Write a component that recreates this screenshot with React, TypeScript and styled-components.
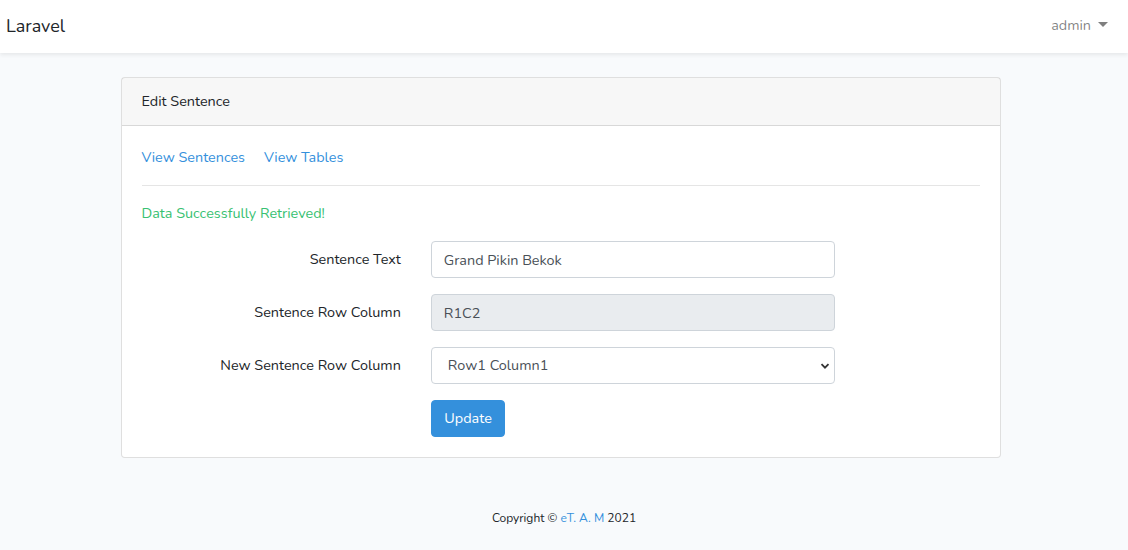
import React, { ReactElement } from 'react';
import styled, { createGlobalStyle } from 'styled-components';

const GlobalStyle = createGlobalStyle`
  html, body { margin: 0; padding: 0; }
  body {
    background: #f8fafc;
    font-family: 'Nunito', 'Lato', 'Noto Sans', sans-serif;
    font-size: 14.4px;
    line-height: 1.6;
    color: #212529;
  }
  * { box-sizing: border-box; }
`;

export default function App(): ReactElement {
  return (
    <React.Fragment>
      <GlobalStyle />
      <Page>
        <NavBar>
          <Brand>Laravel</Brand>
          <UserMenu>
            admin <Caret />
          </UserMenu>
        </NavBar>
        <Main>
          <Card>
            <CardHeader>Edit Sentence</CardHeader>
            <CardBody>
              <LinkRow>
                <NavLink href="#">View Sentences</NavLink>
                <NavLink href="#">View Tables</NavLink>
              </LinkRow>
              <Divider />
              <SuccessText>Data Successfully Retrieved!</SuccessText>
              <FormRow>
                <Label>Sentence Text</Label>
                <Field>
                  <Input defaultValue="Grand Pikin Bekok" />
                </Field>
              </FormRow>
              <FormRow>
                <Label>Sentence Row Column</Label>
                <Field>
                  <Input defaultValue="R1C2" readOnly $readonly />
                </Field>
              </FormRow>
              <FormRow>
                <Label>New Sentence Row Column</Label>
                <Field>
                  <SelectWrap>
                    <Select defaultValue="r1c1">
                      <option value="r1c1">Row1 Column1</option>
                      <option value="r1c2">Row1 Column2</option>
                    </Select>
                    <Chevron width="12" height="12" viewBox="0 0 12 12">
                      <path d="M2.5 4.2 L6 7.7 L9.5 4.2" fill="none" stroke="#333" strokeWidth="1.8" />
                    </Chevron>
                  </SelectWrap>
                </Field>
              </FormRow>
              <FormRow $last>
                <Label />
                <Field>
                  <Button>Update</Button>
                </Field>
              </FormRow>
            </CardBody>
          </Card>
        </Main>
        <Footer>
          Copyright © <FooterLink href="#">eT. A. M</FooterLink> 2021
        </Footer>
      </Page>
    </React.Fragment>
  );
}

const Page = styled.div`
  min-height: 550px;
  display: flex;
  flex-direction: column;
`;

const NavBar = styled.nav`
  height: 53px;
  background: #fff;
  box-shadow: 0 0.125rem 0.25rem rgba(0, 0, 0, 0.075);
  display: flex;
  align-items: center;
  justify-content: space-between;
  padding: 0 20px 0 6px;
`;

const Brand = styled.a`
  font-size: 18px;
  color: #212529;
`;

const UserMenu = styled.a`
  color: rgba(0, 0, 0, 0.5);
  display: flex;
  align-items: center;
  gap: 7px;
  margin-top: -1px;
`;

const Caret = styled.span`
  width: 0;
  height: 0;
  border-top: 5px solid rgba(0, 0, 0, 0.5);
  border-left: 5px solid transparent;
  border-right: 5px solid transparent;
  margin-top: -2px;
`;

const Main = styled.main`
  padding-top: 24px;
  display: flex;
  justify-content: center;
`;

const Card = styled.div`
  width: 880px;
  margin-left: -7px;
  background: #fff;
  border: 1px solid rgba(0, 0, 0, 0.125);
  border-radius: 4px;
`;

const CardHeader = styled.div`
  padding: 12px 20px;
  background: rgba(0, 0, 0, 0.03);
  border-bottom: 1px solid rgba(0, 0, 0, 0.125);
`;

const CardBody = styled.div`
  padding: 20px;
`;

const LinkRow = styled.div`
  display: flex;
  gap: 19px;
`;

const NavLink = styled.a`
  color: #3490dc;
  text-decoration: none;
`;

const Divider = styled.hr`
  border: 0;
  border-top: 1px solid rgba(0, 0, 0, 0.1);
  margin: 16px 0 16px;
`;

const SuccessText = styled.div`
  color: #38c172;
  margin-bottom: 16px;
`;

const FormRow = styled.div<{ $last?: boolean }>`
  display: flex;
  margin: 0 -15px;
  margin-bottom: ${(p) => (p.$last ? '0' : '16px')};
`;

const Label = styled.label`
  flex: 0 0 33.3333%;
  padding: 7px 15px 0;
  text-align: right;
`;

const Field = styled.div`
  flex: 0 0 50%;
  padding: 0 15px;
`;

const Input = styled.input<{ $readonly?: boolean }>`
  display: block;
  width: 100%;
  height: 37px;
  padding: 6px 12px;
  font: inherit;
  color: #495057;
  background: ${(p) => (p.$readonly ? '#e9ecef' : '#fff')};
  border: 1px solid #ced4da;
  border-radius: 4px;
  outline: none;
`;

const SelectWrap = styled.div`
  position: relative;
`;

const Select = styled.select`
  display: block;
  width: 100%;
  height: 37px;
  padding: 6px 12px 6px 16px;
  font: inherit;
  color: #495057;
  background: #fff;
  border: 1px solid #ced4da;
  border-radius: 4px;
  appearance: none;
  outline: none;
`;

const Chevron = styled.svg`
  position: absolute;
  right: 4px;
  top: 13px;
  pointer-events: none;
`;

const Button = styled.button`
  font: inherit;
  color: #fff;
  background: #3490dc;
  border: 1px solid #3490dc;
  border-radius: 4px;
  padding: 6px 12.5px;
  height: 37px;
`;

const Footer = styled.footer`
  text-align: center;
  font-size: 12px;
  color: #212529;
  margin-top: 51px;
`;

const FooterLink = styled.a`
  color: #3490dc;
  text-decoration: none;
`;
